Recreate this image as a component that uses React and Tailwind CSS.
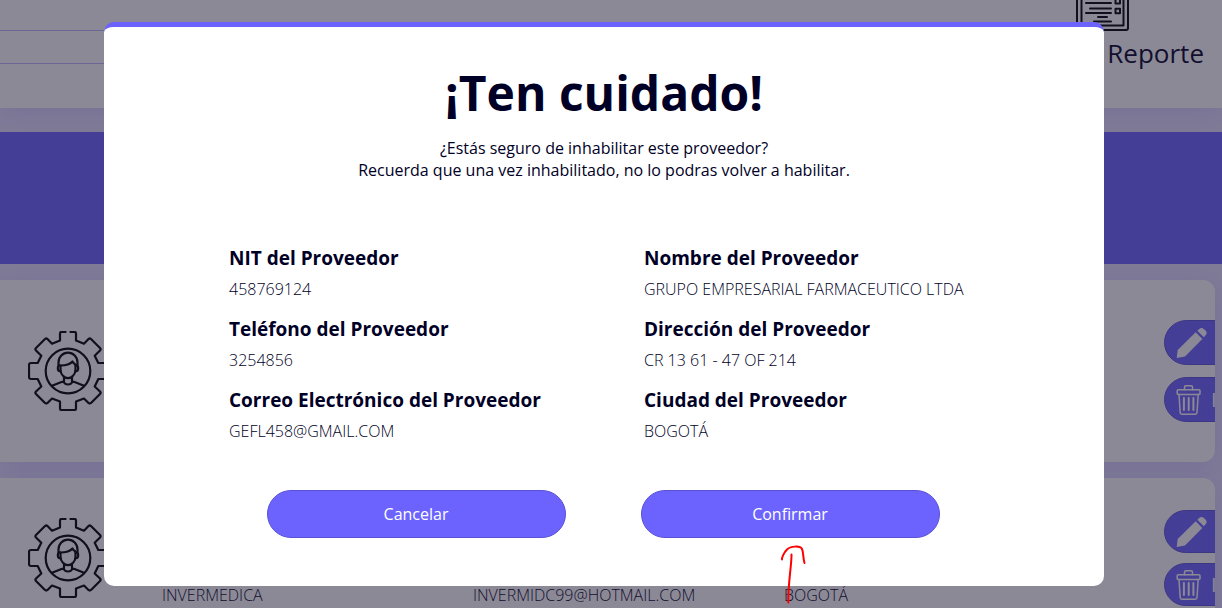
import React from "react";

const fields = [
  ["NIT del Proveedor", "458769124"],
  ["Nombre del Proveedor", "GRUPO EMPRESARIAL FARMACEUTICO LTDA"],
  ["Teléfono del Proveedor", "3254856"],
  ["Dirección del Proveedor", "CR 13 61 - 47 OF 214"],
  ["Correo Electrónico del Proveedor", "GEFL458@GMAIL.COM"],
  ["Ciudad del Proveedor", "BOGOTÁ"],
];

function ProviderIcon() {
  return (
    <svg className="size-20 shrink-0" viewBox="0 0 80 80" fill="none" stroke="#000" strokeWidth="2.2" strokeLinecap="round" strokeLinejoin="round" aria-hidden="true">
      <path d="M37.500 1H33.500Q32 1 32 2.500V9.500L24 12.700L19.500 8Q18.300 7 17 8L8 17Q6.800 18.300 8 19.500L13.300 24.700L9.700 32H3Q1 32 1 34V46Q1 48 3 48H9.700L13.300 55.500L8 60.500Q6.800 61.800 8 63L17 72Q18.300 73 19.500 72L24 67.500L32 70.500V77.500Q32 79 33.500 79H46.500Q48 79 48 77.500V70.500L56 67.500L60.500 72Q61.700 73 63 72L72 63Q73.200 61.800 72 60.500L66.700 55.500L70.300 48H77Q79 48 79 46V34Q79 32 77 32H70.300L66.700 24.700L72 19.500Q73.200 18.300 72 17L63 8Q61.700 7 60.500 8L56 12.700L48 9.500V2.500Q48 1 46.500 1H42.500" />
      <circle cx="40" cy="40" r="22.300" />
      <path d="M30.500 34.500V31.500A9.500 9.800 0 0 1 49.500 31.500V34.500" />
      <path d="M32.500 34.500Q41 34.500 44.500 30.500Q45.500 32.500 47.500 33.500V39C47.500 43.500 43.500 47.200 40 47.200S32.500 43.500 32.500 39Z" />
      <path d="M32.500 34.500Q29.800 34 29.800 37.300T32.500 40M47.500 34.500Q50.200 34 50.200 37.300T47.500 40" />
      <path d="M36 46.500V50L24 54.700M44 46.500V50L56 54.700M35.500 50.200Q36.500 53.500 40 53.500T44.500 50.200" />
    </svg>
  );
}

function PencilIcon() {
  return (
    <svg className="h-[30px] w-[31px] shrink-0" viewBox="0 0 31 30" fill="#fff" aria-hidden="true">
      <path d="M.7 30L1.700 22L19.700 4.300L26.300 11L9 28.500Z" />
      <path d="M21.300 2.800L23 1.200Q25.500-1 28 1.200L29.500 2.600Q31.700 4.800 29.700 7L27.900 9.300Z" />
    </svg>
  );
}

function TrashIcon() {
  return (
    <svg className="h-[30px] w-[31px] shrink-0" viewBox="0 0 31 30" fill="none" stroke="#fff" strokeWidth="1.500" strokeLinejoin="round" strokeLinecap="round" aria-hidden="true">
      <path d="M8.500 4.800V2.300Q8.500 .8 10 .8H15Q16.500 .8 16.500 2.300V4.800" />
      <rect x="1.200" y="4.800" width="22.800" height="4.700" rx="1" />
      <path d="M3 9.500L4.200 27.500Q4.300 29.200 6 29.200H19.200Q20.900 29.200 21 27.500L22.200 9.500" />
      <path strokeWidth="2" d="M7.900 13V25M12.700 13V25M17.400 13V25" />
    </svg>
  );
}

function ReportIcon() {
  return (
    <svg className="size-[53px] shrink-0" viewBox="0 0 53 53" fill="none" stroke="#000" strokeWidth="2" strokeLinejoin="round" strokeLinecap="round" aria-hidden="true">
      <rect x="1" y="1" width="51" height="51" rx="2" />
      <rect x="5.500" y="5.500" width="42" height="42" />
      <path d="M10 19H35M10 25H35M14 30.500H35M10 35H35M22 39H31M18 43.500H35" />
      <rect x="39.500" y="21" width="4.500" height="4.500" />
      <rect x="39.500" y="30.800" width="4.500" height="4.500" />
    </svg>
  );
}

function ProviderCard({ className, buttonClass, values = [] }) {
  return (
    <article className={`mr-[7px] flex items-center overflow-hidden rounded-r-xl bg-white pl-7 shadow-[0_4px_24px_rgba(108,99,255,0.15)] ${className}`}>
      <ProviderIcon />
      <div className="ml-[54px] grid flex-1 grid-cols-3 self-end pb-8 text-base leading-[22px] font-light">
        {values.map((v) => (
          <span key={v}>{v}</span>
        ))}
      </div>
      <div className={`ml-[69px] flex w-[51px] flex-col ${buttonClass}`}>
        <button type="button" aria-label="Editar" className="flex w-40 flex-1 items-center rounded-full border border-[#5a52d5] bg-[#6c63ff] pl-[11px]">
          <PencilIcon />
        </button>
        <button type="button" className="flex w-40 flex-1 items-center gap-1 rounded-full border border-[#5a52d5] bg-[#6c63ff] pl-[11px] text-xl text-white">
          <TrashIcon />
          Inhabilitar
        </button>
      </div>
    </article>
  );
}

export default function App() {
  return (
    <div className="relative h-screen overflow-hidden bg-[#e4e1ff] font-['Open_Sans',sans-serif] text-[#000026]">
      <header className="flex h-[108px] items-start justify-between bg-white shadow-[0_4px_24px_rgba(108,99,255,0.15)]">
        <input type="search" aria-label="Buscar proveedor" className="mt-[30px] h-[34px] w-1/3 border-y border-[#bab6ff] px-4 outline-none" />
        <a href="#reporte" className="mr-[18px] flex flex-col items-center">
          <span className="flex h-[31px] items-end overflow-hidden">
            <ReportIcon />
          </span>
          <span className="mt-1 text-[26px] leading-9">Generar Reporte</span>
        </a>
      </header>
      <div className="relative mt-6 h-[132px] bg-[#6c63ff]" />
      <main className="mt-4 flex flex-col gap-4">
        <ProviderCard className="h-[182px]" buttonClass="h-[102px] gap-3" />
        <ProviderCard
          className="h-40"
          buttonClass="h-24 gap-[10px]"
          values={["INVERMEDICA", "INVERMIDC99@HOTMAIL.COM", "BOGOTÁ"]}
        />
      </main>

      <div className="absolute inset-0 flex items-center justify-center bg-[#221d36]/52 pr-[14px]">
        <section role="dialog" aria-modal="true" aria-labelledby="dialog-title" className="w-full max-w-[1000px] rounded-[10px] border-t-[5px] border-[#6c63ff] bg-white pt-[34px] pb-12">
          <h1 id="dialog-title" className="text-center text-5xl leading-[64px] font-bold">
            ¡Ten cuidado!
          </h1>
          <p className="mt-3 text-center text-base leading-[22px]">
            ¿Estás seguro de inhabilitar este proveedor?
            <br />
            Recuerda que una vez inhabilitado, no lo podras volver a habilitar.
          </p>
          <dl className="mt-[63px] ml-[125px] grid grid-cols-[415px_1fr] gap-y-[15px]">
            {fields.map(([label, value]) => (
              <div key={label}>
                <dt className="text-[19px] leading-7 font-bold">{label}</dt>
                <dd className="mt-[6px] text-base leading-[22px] font-light">{value}</dd>
              </div>
            ))}
          </dl>
          <div className="mt-12 flex justify-center gap-[75px] pr-[2px]">
            <button type="button" className="h-12 w-[299px] rounded-full border border-[#5a52d5] bg-[#6c63ff] text-base text-white">
              Cancelar
            </button>
            <button type="button" className="relative h-12 w-[299px] rounded-full border border-[#5a52d5] bg-[#6c63ff] text-base text-white">
              Confirmar
              <svg className="absolute top-[54px] left-[138px] h-[60px] w-7" viewBox="0 0 28 60" fill="none" stroke="#f00" strokeWidth="2" strokeLinecap="round" strokeLinejoin="round" aria-hidden="true">
                <path d="M2 14.500C1.500 13 4 7.500 7 4.500C10 1.500 20 0 22 4C23.500 7 23 13 24.500 18" />
                <path d="M11.500 9.500C11.500 22 8 38 8.300 57.500" />
              </svg>
            </button>
          </div>
        </section>
      </div>
    </div>
  );
}
